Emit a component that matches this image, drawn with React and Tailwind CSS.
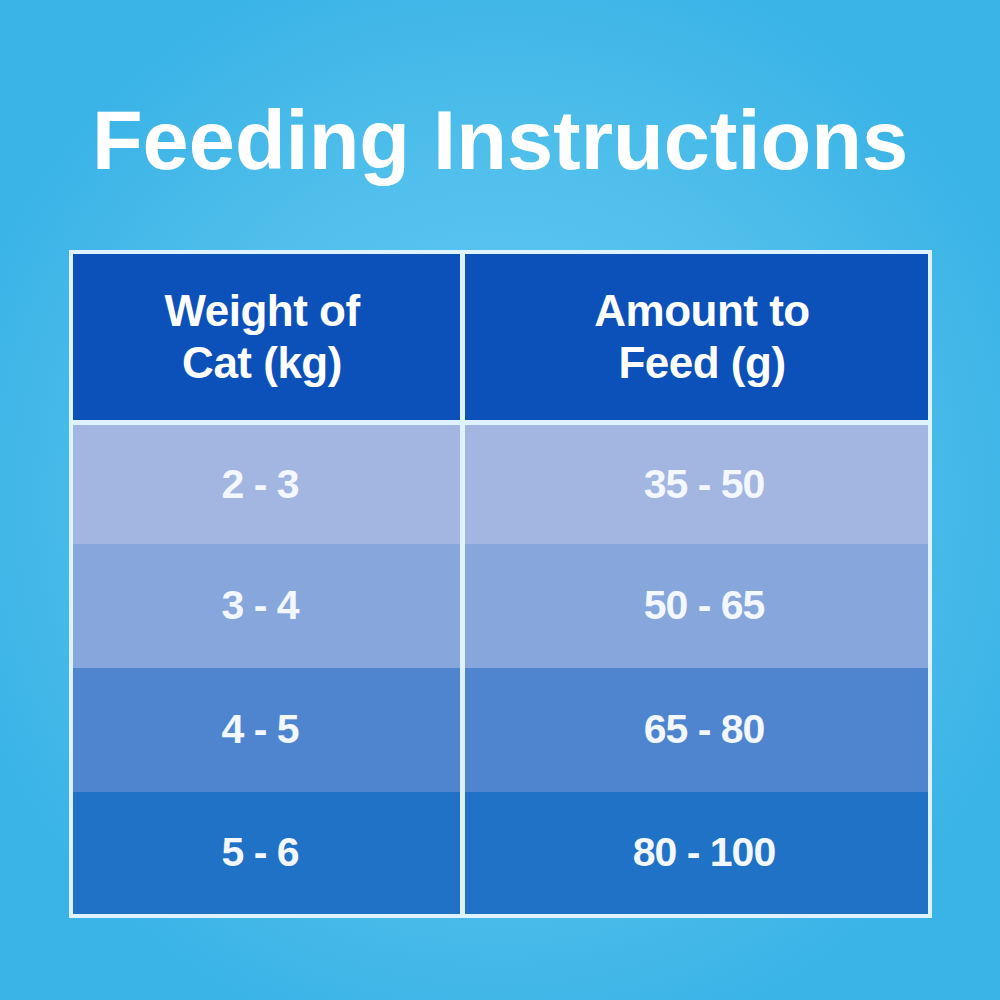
import React from "react";

const rows = [
  { weight: "2 - 3", amount: "35 - 50", bg: "bg-[#a3b5e1]", h: "h-[119px]" },
  { weight: "3 - 4", amount: "50 - 65", bg: "bg-[#86a6dc]", h: "h-[124px]" },
  { weight: "4 - 5", amount: "65 - 80", bg: "bg-[#4f85cf]", h: "h-[124px]" },
  { weight: "5 - 6", amount: "80 - 100", bg: "bg-[#1f72c6]", h: "h-[122px]" },
];

const App = () => {
  return (
    <div
      className="w-[1000px] h-[1000px] flex flex-col items-center bg-[radial-gradient(circle_at_50%_50%,#66caf0_0%,#52c0ec_45%,#3ab3e6_80%)]"
      style={{ fontFamily: '"Liberation Sans", Arial, sans-serif' }}
    >
      <h1 className="pt-[99px] text-[83px] leading-[84px] font-bold text-white">
        Feeding Instructions
      </h1>

      <div className="mt-[67px] w-[863px] border-4 border-[#def3ff] bg-[#def3ff] flex flex-col gap-[5px]">
        <div className="grid grid-cols-[387px_463px] gap-x-[5px] h-[166px]">
          <div className="bg-[#0c50b9] flex items-center justify-center pr-2 text-center text-white font-bold text-[44px] leading-[52px] tracking-[-0.5px]">
            Weight of
            <br />
            Cat (kg)
          </div>
          <div className="bg-[#0c50b9] flex items-center justify-center pl-3 text-center text-white font-bold text-[44px] leading-[52px] tracking-[-0.5px]">
            Amount to
            <br />
            Feed (g)
          </div>
        </div>

        <div className="grid grid-cols-[387px_463px] gap-x-[5px]">
          <div className="flex flex-col">
            {rows.map((r) => (
              <div
                key={r.weight}
                className={`${r.h} ${r.bg} flex items-center justify-center pr-3 text-[#f3f7ff] font-bold text-[41px] tracking-[-1px]`}
              >
                {r.weight}
              </div>
            ))}
          </div>
          <div className="flex flex-col">
            {rows.map((r) => (
              <div
                key={r.amount}
                className={`${r.h} ${r.bg} flex items-center justify-center pl-4 text-[#f3f7ff] font-bold text-[41px] tracking-[-1px]`}
              >
                {r.amount}
              </div>
            ))}
          </div>
        </div>
      </div>
    </div>
  );
};

export default App;
